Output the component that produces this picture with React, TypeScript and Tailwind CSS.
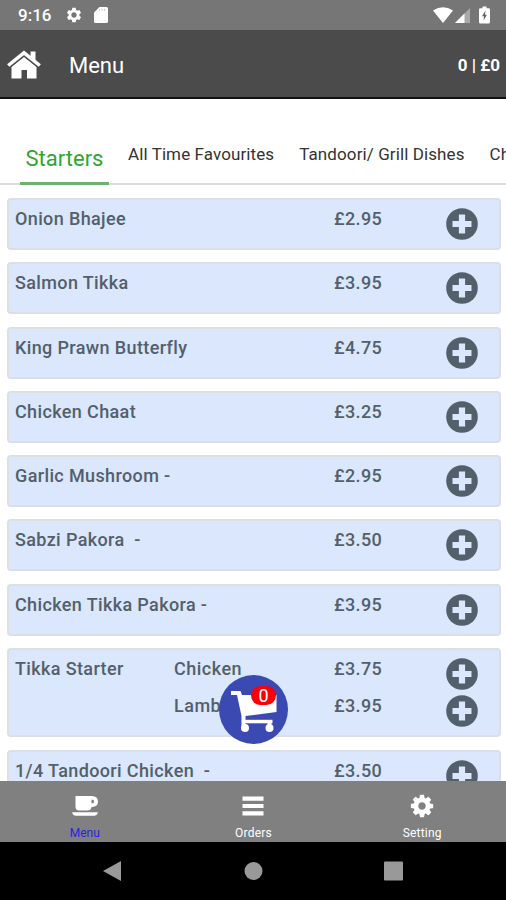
import { MdSettings } from "react-icons/md";

type Option = { name?: string; price: string };
type Dish = { title: string; options: Option[] };

const tabs = ["All Time Favourites", "Tandoori/ Grill Dishes", "Ch"];

const dishes: Dish[] = [
  { title: "Onion Bhajee", options: [{ price: "£2.95" }] },
  { title: "Salmon Tikka", options: [{ price: "£3.95" }] },
  { title: "King Prawn Butterfly", options: [{ price: "£4.75" }] },
  { title: "Chicken Chaat", options: [{ price: "£3.25" }] },
  { title: "Garlic Mushroom -", options: [{ price: "£2.95" }] },
  { title: "Sabzi Pakora  -", options: [{ price: "£3.50" }] },
  { title: "Chicken Tikka Pakora -", options: [{ price: "£3.95" }] },
  {
    title: "Tikka Starter",
    options: [
      { name: "Chicken", price: "£3.75" },
      { name: "Lamb", price: "£3.95" },
    ],
  },
  { title: "1/4 Tandoori Chicken  -", options: [{ price: "£3.50" }] },
];

const StatusBar = () => (
  <div className="flex h-[30px] shrink-0 items-center bg-[#767676] pr-[16px] pl-[18px] text-white">
    <span className="w-[47px] pt-[2px] text-[17px] font-medium">9:16</span>
    <MdSettings size={18} />
    <svg className="ml-[11px]" width="14" height="18" viewBox="0 0 14 18">
      <path fill="#fff" d="M5.500 1H12.500Q14 1 14 2.500V15.500Q14 17 12.500 17H1.500Q0 17 0 15.500V6.500Z" />
      <path stroke="#ccc" strokeWidth="1" d="M5.500 3v2M8 3v2M10.500 3v2" />
    </svg>
    <svg className="ml-auto" width="20" height="18" viewBox="0 0 20 18">
      <path fill="#fff" d="M0 4.500Q10-2.200 20 4.500L10 17Z" />
    </svg>
    <svg className="ml-[2px]" width="16" height="18" viewBox="0 0 16 18">
      <path fill="#a8a8a8" d="M0 17L15 2V17Z" />
      <path fill="#fff" d="M0 17L9.500 7.500V17Z" />
    </svg>
    <svg className="ml-[8px]" width="11" height="18" viewBox="0 0 11 18">
      <path fill="#fff" d="M3.500 0.500h4v1.700H9.500Q11 2.200 11 3.600V16Q11 17.500 9.500 17.500H1.500Q0 17.500 0 16V3.600Q0 2.200 1.500 2.200H3.500Z" />
      <path fill="#666" d="M6.500 4.500L3 10.200H5L4.500 14.500L8 8.800H6Z" />
    </svg>
  </div>
);

const HomeIcon = () => (
  <svg width="36" height="32" viewBox="0 0 36 32">
    <path fill="#fff" d="M5.500 17L18 7L30.500 17V28.500H21V20H15.500V28.500H5.500Z" />
    <path fill="#fff" d="M24.500 1.500h5v11l-5-4z" />
    <path fill="none" stroke="#4b4b4b" strokeWidth="1" d="M3.500 17.500L18 5.800L32.500 17.500" />
    <path fill="none" stroke="#fff" strokeWidth="3.500" d="M2.200 15.500L18 2.800L33.800 15.500" />
  </svg>
);

const PlusIcon = () => (
  <svg width="32" height="32" viewBox="0 0 32 32">
    <circle cx="16" cy="16" r="15.800" fill="#535f6b" />
    <path fill="#dae7fd" d="M12.900 6.500h6.200v6.400h6.400v6.200h-6.400v6.400h-6.200v-6.400H6.500v-6.200h6.400z" />
  </svg>
);

const CoffeeIcon = () => (
  <svg width="28" height="22" viewBox="0 0 28 22">
    <path
      fill="#fff"
      fillRule="evenodd"
      d="M4.500 1H21Q27 1.200 27 6.500T21 12H20.500Q20 15.500 16.500 15.500H8Q4.500 15.500 4.500 11.500ZM20.500 4.500V8.500Q23.200 8.500 23.200 6.500T20.500 4.500Z"
    />
    <path fill="#fff" d="M1 17.200H27Q26 20.800 23 20.800H5Q2 20.800 1 17.200Z" />
  </svg>
);

const BarsIcon = () => (
  <svg width="22" height="22" viewBox="0 0 22 22">
    <path fill="#fff" d="M0.500 1.500h21v4.200h-21zM0.500 9h21v4h-21zM0.500 16.300h21v4.200h-21z" />
  </svg>
);

const CogIcon = () => (
  <svg width="26" height="26" viewBox="0 0 1792 1792">
    <path
      fill="#fff"
      d="M1024 896q0-106-75-181t-181-75-181 75-75 181 75 181 181 75 181-75 75-181zm512-109v222q0 12-8 23t-20 13l-185 28q-19 54-39 91 35 50 107 138 10 12 10 25t-9 23q-27 37-99 108t-94 71q-12 0-26-9l-138-108q-44 23-91 38-16 136-29 186-7 28-36 28h-222q-14 0-24.500-8.500t-11.500-21.500l-28-184q-49-16-90-37l-141 107q-10 9-25 9-14 0-25-11-126-114-165-168-7-10-7-23 0-12 8-23 15-21 51-66.500t54-70.500q-27-50-41-99l-183-27q-13-2-21-12.500t-8-23.500v-222q0-12 8-23t19-13l186-28q14-46 39-92-40-57-107-138-10-12-10-24 0-10 9-23 26-36 98.500-107.500t94.500-71.500q13 0 26 10l138 107q44-23 91-38 16-136 29-186 7-28 36-28h222q14 0 24.500 8.500t11.500 21.500l28 184q49 16 90 37l142-107q9-9 24-9 13 0 25 10 129 119 165 170 7 8 7 22 0 12-8 23-15 21-51 66.500t-54 70.500q26 50 41 98l183 28q13 2 21 12.500t8 23.500z"
      transform="translate(128 0)"
    />
  </svg>
);

const DishCard = ({ dish }: { dish: Dish }) => (
  <div className="rounded-[4px] border-2 border-[#dcdfe4] bg-[#dae7fd] pt-[7px] pb-[8px] pl-[6px]">
    {dish.options.map((option, i) => (
      <div key={option.price} className="flex h-[37.300px] items-start last:h-[33px]">
        <span className="w-[159px] whitespace-pre">{i === 0 ? dish.title : ""}</span>
        <span className="w-[160px] tracking-[0.500px]">{option.name}</span>
        <span className="w-[111.500px]">{option.price}</span>
        <button className="mt-px h-8 w-8 shrink-0">
          <PlusIcon />
        </button>
      </div>
    ))}
  </div>
);

const CartButton = () => (
  <button className="absolute top-[675px] left-[219px] h-[69px] w-[69px] rounded-full bg-[#3a4ab2]">
    <svg width="69" height="69" viewBox="0 0 69 69">
      <path fill="#fff" d="M12 16H21.500L23 20H57.500V37L26.500 41V54H22.500V41L18 20H12Z" />
      <path fill="#fff" d="M23 44.800h30.500v3.500h-30.500z" />
      <path fill="#fff" d="M48.500 46h4v5h-4z" />
      <circle cx="26" cy="53" r="4" fill="#fff" />
      <circle cx="50.500" cy="53" r="4" fill="#fff" />
    </svg>
    <span className="absolute top-[11px] left-[32px] flex h-[19px] w-[25px] items-center justify-center rounded-[9.500px] bg-[#fb0007] pt-px text-[18px] leading-none text-white">
      0
    </span>
  </button>
);

export default function App() {
  return (
    <div className="relative flex h-[900px] w-[506px] flex-col overflow-hidden bg-white font-[Roboto,sans-serif]">
      <StatusBar />
      <header className="flex h-[69px] shrink-0 items-center border-b-2 border-[#111] bg-[#4b4b4b] pt-[4px] pr-[6px] pl-[6px] text-white">
        <HomeIcon />
        <h1 className="ml-[27px] text-[22px]">Menu</h1>
        <span className="ml-auto text-[17px] font-bold">0 | £0</span>
      </header>
      <nav className="flex h-[86px] shrink-0 items-end border-b-2 border-[#dcdcdc] pl-[20px] whitespace-nowrap">
        <div className="-mb-[2px] flex h-[43px] w-[89px] shrink-0 justify-center border-b-[3px] border-[#6db36d] text-[22px] leading-[34px] text-[#31a52f]">
          Starters
        </div>
        <div className="ml-[19px] flex h-[41px] gap-[25px] text-[17px] leading-[24px] tracking-[0.100px] text-[#333]">
          {tabs.map((tab) => (
            <span key={tab}>{tab}</span>
          ))}
        </div>
      </nav>
      <main className="flex min-h-0 flex-1 flex-col gap-[12.300px] overflow-hidden pt-[13px] pr-[5px] pl-[7px] text-[18px] leading-[24px] font-medium tracking-[0.370px] text-[#535f6b] *:shrink-0">
        {dishes.map((dish) => (
          <DishCard key={dish.title} dish={dish} />
        ))}
      </main>
      <footer className="grid h-[61px] shrink-0 grid-cols-3 bg-[#808080] text-[12px] text-white">
        <div className="flex flex-col items-center pt-[14px] pl-px text-[#2a20e8]">
          <CoffeeIcon />
          <span className="mt-[7px]">Menu</span>
        </div>
        <div className="flex flex-col items-center pt-[14px] pl-px">
          <BarsIcon />
          <span className="mt-[7px] tracking-[0.200px]">Orders</span>
        </div>
        <div className="flex flex-col items-center pt-[12px] pl-px">
          <CogIcon />
          <span className="mt-[5px] tracking-[0.200px]">Setting</span>
        </div>
      </footer>
      <div className="flex h-[58px] shrink-0 items-center bg-black pl-[103px]">
        <svg width="301" height="22" viewBox="0 0 301 22" fill="#999">
          <path d="M18 1V21L0 11Z" />
          <circle cx="150.500" cy="11" r="9" />
          <rect x="281" y="1.500" width="19" height="19" rx="1" />
        </svg>
      </div>
      <CartButton />
    </div>
  );
}
